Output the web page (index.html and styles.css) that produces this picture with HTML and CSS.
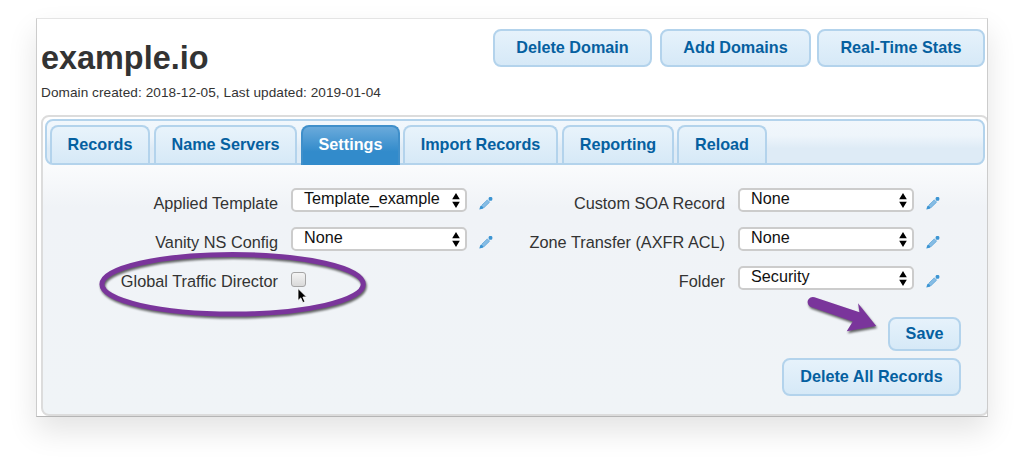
FILE: index.html
```
<!DOCTYPE html>
<html lang="en">
<head>
  <meta charset="UTF-8">
  <meta name="viewport" content="width=device-width, initial-scale=1.0">
  <title>example.io - Domain Settings</title>
  <link rel="stylesheet" href="styles.css">
</head>
<body>
  <svg class="sprite" width="0" height="0">
    <symbol id="pencil" viewBox="0 0 14 14">
      <path d="M1.600 10.400L8.300 3.900L10.600 6.200L4 12.600z" fill="#86bce4"/>
      <path d="M.3 13.600L1.300 10.300L2.300 9.500L4.700 11.800L3.800 12.700z" fill="#3c95d3"/>
      <path d="M2.800 9.200L8.300 3.900L10.600 6.200L5 11.600" fill="none" stroke="#5ba4da" stroke-width=".8"/>
      <rect x="9.700" y="1.100" width="3.600" height="3.600" rx="1.200" fill="#3c95d3"/>
    </symbol>
    <symbol id="arrows" viewBox="0 0 8 15">
      <path d="M4 0l3.800 6.200H.2zM4 15L.2 8.800h7.600z" fill="#000"/>
    </symbol>
  </svg>

  <main class="window">
    <header class="top">
      <div class="domain">
        <h1>example.io</h1>
        <p>Domain created: 2018-12-05, Last updated: 2019-01-04</p>
      </div>
      <div class="actions">
        <button class="btn btn-delete">Delete Domain</button>
        <button class="btn btn-add">Add Domains</button>
        <button class="btn btn-stats">Real-Time Stats</button>
      </div>
    </header>

    <section class="panel">
      <nav class="tabs">
        <a class="tab tab-records">Records</a>
        <a class="tab tab-servers">Name Servers</a>
        <a class="tab tab-settings active">Settings</a>
        <a class="tab tab-import">Import Records</a>
        <a class="tab tab-reporting">Reporting</a>
        <a class="tab tab-reload">Reload</a>
      </nav>

      <div class="settings">
        <div class="column">
          <div class="row">
            <span class="label">Applied Template</span>
            <div class="select"><span>Template_example</span><svg class="arrows"><use href="#arrows"/></svg></div>
            <svg class="pencil"><use href="#pencil"/></svg>
          </div>
          <div class="row">
            <span class="label">Vanity NS Config</span>
            <div class="select"><span>None</span><svg class="arrows"><use href="#arrows"/></svg></div>
            <svg class="pencil"><use href="#pencil"/></svg>
          </div>
          <div class="row">
            <span class="label">Global Traffic Director</span>
            <span class="checkbox"></span>
          </div>
        </div>
        <div class="column">
          <div class="row">
            <span class="label">Custom SOA Record</span>
            <div class="select"><span>None</span><svg class="arrows"><use href="#arrows"/></svg></div>
            <svg class="pencil"><use href="#pencil"/></svg>
          </div>
          <div class="row">
            <span class="label">Zone Transfer (AXFR ACL)</span>
            <div class="select"><span>None</span><svg class="arrows"><use href="#arrows"/></svg></div>
            <svg class="pencil"><use href="#pencil"/></svg>
          </div>
          <div class="row">
            <span class="label">Folder</span>
            <div class="select"><span>Security</span><svg class="arrows"><use href="#arrows"/></svg></div>
            <svg class="pencil"><use href="#pencil"/></svg>
          </div>
        </div>
      </div>

      <div class="footer">
        <button class="btn btn-save">Save</button>
        <button class="btn btn-delete-all">Delete All Records</button>
      </div>
    </section>
  </main>

  <!-- callouts and mouse pointer -->
  <svg class="marks" viewBox="0 0 1024 471">
    <ellipse class="callout" cx="232.600" cy="284.300" rx="130.700" ry="29.800" fill="none" stroke="#7a359b" stroke-width="5"/>
    <path class="callout" d="M814.500 297.200L859.500 312.200L858 303.300L876.200 326L846.700 331.300L852.800 321.600L811 306.900A4.900 4.900 0 0 1 814.500 297.200z" fill="#7a359b"/>
    <path class="pointer" d="M298 288.500v12l2.800-2.600 2 4.700 2.100-.9-2-4.700h3.700z" fill="#000" stroke="#fff" stroke-width=".8"/>
  </svg>
</body>
</html>
```

FILE: styles.css
```
* {
  box-sizing: border-box;
}
body {
  margin: 0;
  height: 471px;
  padding: 18px 36px;
  overflow: hidden;
  background: #fff;
  color: #333;
  font-family: "Liberation Sans", Arial, sans-serif;
}
.sprite {
  position: absolute;
}
.window {
  width: 952px;
  height: 399px;
  overflow: hidden;
  background: #fff;
  border: 1px solid #ccc;
  border-top-color: #e4e4e4;
  border-bottom-color: #b5b5b5;
  box-shadow: 0 14px 28px rgba(0, 0, 0, 0.11);
}
.top {
  display: flex;
  justify-content: space-between;
  height: 96px;
  padding: 10px 2px 0 4px;
}
h1 {
  margin: 11px 0 0;
  font-size: 32.4px;
  line-height: 37px;
}
.domain p {
  margin: 8px 0 0;
  font-size: 13.6px;
  line-height: 16px;
  letter-spacing: 0.07px;
}
.actions {
  display: flex;
  align-items: flex-start;
}
.btn {
  height: 38px;
  padding: 0 0 1px;
  border: 2px solid #b3d3ec;
  border-radius: 8px;
  background: linear-gradient(#e6f2fb, #d6e9f7);
  color: #0560a0;
  font-family: inherit;
  font-size: 16.2px;
  font-weight: bold;
}
.btn-delete {
  width: 159px;
  margin-right: 8px;
}
.btn-add {
  width: 151px;
  margin-right: 6px;
}
.btn-stats {
  width: 168px;
}
.panel {
  width: 948px;
  height: 301px;
  margin-left: 4px;
  padding: 2px;
  border: 2px solid #dcdcdc;
  border-radius: 8px;
  background: linear-gradient(#fff 0, #fbfcfd 45px, #f0f3f7 90px, #f0f4f7 100%);
}
.tabs {
  display: flex;
  width: 940px;
  height: 46px;
  padding: 4px 0 0 3px;
  border: 2px solid #b3d3ec;
  border-radius: 8px;
  background: linear-gradient(#f1f7fc 0, #eef5fb 35%, #deebf6 65%, #deebf6 100%);
}
.tab {
  height: 38px;
  margin-right: 4px;
  border: 2px solid #b3d3ec;
  border-bottom: 0;
  border-radius: 8px 8px 0 0;
  background: linear-gradient(#e8f3fb, #d6e9f7);
  color: #0560a0;
  font-size: 16.2px;
  font-weight: bold;
  line-height: 35px;
  text-align: center;
}
.tab-records {
  width: 100px;
}
.tab-servers {
  width: 143px;
}
.tab-settings {
  width: 99px;
  margin-right: 3px;
}
.tab-import {
  width: 155px;
}
.tab-reporting {
  width: 112px;
  margin-right: 3px;
}
.tab-reload {
  width: 90px;
}
.tab.active {
  height: 40px;
  border-color: #3f8fca;
  background: linear-gradient(#6aaadb, #328bcb 65%);
  color: #fff;
}
.settings {
  display: flex;
  padding: 23px 0 0 1px;
}
.column {
  width: 447px;
}
.row {
  display: flex;
  height: 39px;
}
.label {
  width: 232px;
  margin-right: 13px;
  padding-top: 6px;
  font-size: 16.3px;
  line-height: 19px;
  text-align: right;
  white-space: nowrap;
}
.select {
  display: flex;
  justify-content: space-between;
  width: 176px;
  height: 24px;
  padding: 0 5px 0 11px;
  border: 2px solid #ccc;
  border-radius: 5px;
  background: #fff;
  color: #111;
  font-size: 16.2px;
  line-height: 17px;
}
.arrows {
  width: 8px;
  height: 15px;
  margin-top: 3px;
}
.pencil {
  width: 14px;
  height: 14px;
  margin: 8px 0 0 12px;
}
.checkbox {
  width: 15px;
  height: 15px;
  margin-top: 6px;
  border: 1px solid #a5a5a5;
  border-radius: 3px;
  background: linear-gradient(#f4f4f4, #d9d9d9);
}
.footer {
  display: flex;
  flex-direction: column;
  align-items: flex-end;
  gap: 7px;
  padding: 12px 24px 0 0;
}
.btn-save {
  width: 73px;
  height: 34px;
}
.btn-delete-all {
  width: 179px;
}
.marks {
  position: absolute;
  top: 0;
  left: 0;
  width: 1024px;
  height: 471px;
}
.callout {
  filter: drop-shadow(1px 2px 1px rgba(0, 0, 0, 0.6));
}
```
